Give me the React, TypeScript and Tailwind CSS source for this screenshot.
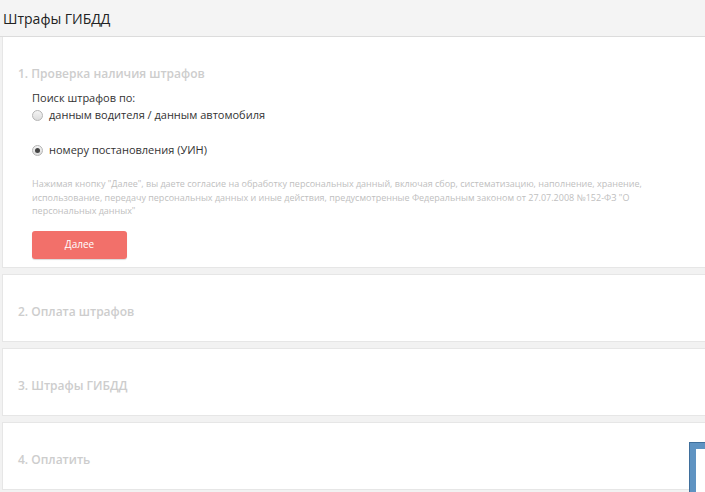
import React from 'react';

const Radio: React.FC<{ checked?: boolean; label: string }> = ({ checked = false, label }) => (
  <label className="flex items-center text-[11px] leading-[16px] text-[#333]">
    <span className="mr-[6px] flex h-[11px] w-[11px] items-center justify-center rounded-full border border-[#b5b5b5] bg-gradient-to-b from-[#f4f4f4] to-[#dcdcdc]">
      {checked && <span className="h-[5px] w-[5px] rounded-full bg-[#444]" />}
    </span>
    {label}
  </label>
);

const StepCard: React.FC<{ title: string }> = ({ title }) => (
  <div className="mt-[6px] h-[68px] border border-r-0 border-[#e6e6e6] bg-white pl-[15px] pt-[28px]">
    <h3 className="text-[12px] leading-[18px] font-semibold text-[#cdcdcd]">{title}</h3>
  </div>
);

export default function App() {
  return (
    <div className="relative h-[492px] w-[705px] overflow-hidden bg-[#f2f2f2] font-['Open_Sans',sans-serif]">
      <div className="flex h-[37px] items-center border-b border-[#dcdcdc] bg-[#f4f4f4] pl-[3px]">
        <h1 className="text-[14px] text-[#222]">Штрафы ГИБДД</h1>
      </div>

      <div className="pl-[2px]">
        <div className="border border-t-0 border-r-0 border-[#e6e6e6] bg-white pb-[8px] pl-[15px] pt-[28px]">
          <h2 className="text-[12px] leading-[18px] font-semibold text-[#cdcdcd]">1. Проверка наличия штрафов</h2>
          <div className="pl-[14px]">
            <p className="mt-[7px] text-[11px] leading-[16px] text-[#333]">Поиск штрафов по:</p>
            <div className="mt-[1px]">
              <Radio label="данным водителя / данным автомобиля" />
            </div>
            <div className="mt-[19px]">
              <Radio checked label="номеру постановления (УИН)" />
            </div>
            <p className="mt-[19px] w-[620px] text-[9px] leading-[13.5px] text-[#c0c0c0]">
              Нажимая кнопку "Далее", вы даете согласие на обработку персональных данный, включая сбор, систематизацию, наполнение, хранение, использование, передачу персональных данных и иные действия, предусмотренные Федеральным законом от 27.07.2008 №152-ФЗ "О персональных данных"
            </p>
            <button className="mt-[13px] h-[28px] w-[95px] rounded-[3px] bg-[#f2706a] text-[10px] text-white shadow-[0_1px_1px_rgba(0,0,0,0.15)]">
              Далее
            </button>
          </div>
        </div>

        <StepCard title="2. Оплата штрафов" />
        <StepCard title="3. Штрафы ГИБДД" />
        <StepCard title="4. Оплатить" />
      </div>

      <div className="absolute left-[690px] top-[443px] h-[60px] w-[40px] border-[6px] border-r-0 border-b-0 border-[#5f93c2] bg-white shadow-[0_0_0_1px_#3f6f9c]" />
    </div>
  );
}
